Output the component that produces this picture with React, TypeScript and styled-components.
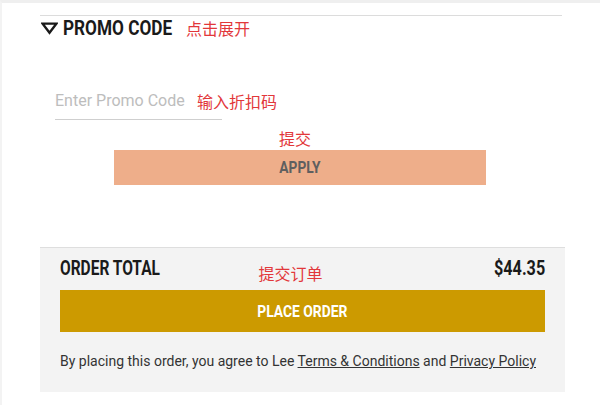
import React from "react";
import styled, { createGlobalStyle, css } from "styled-components";

const Global = createGlobalStyle`
  html, body { margin: 0; padding: 0; background: #fff; }
  body {
    font-family: Roboto, "Noto Sans CJK SC", sans-serif;
    border-top: 3px solid #efefef;
    border-left: 2px solid #f3f3f3;
    height: 405px;
    box-sizing: border-box;
    overflow: hidden;
  }
`;

const condensed = (origin: string, scale = 0.86) => css`
  display: inline-block;
  font-family: Roboto, sans-serif;
  font-weight: 700;
  transform: scaleX(${scale});
  transform-origin: ${origin} center;
`;

const Page = styled.div`
  padding: 12px 0 0 38px;
  width: 525px;
`;

const PromoSection = styled.section`
  width: 522px;
  border-top: 1px solid #dcdcdc;
`;

const PromoHeader = styled.div`
  display: flex;
  align-items: center;
  height: 22px;
  margin-top: 1px;
`;

const Triangle = styled.svg`
  width: 17px;
  height: 13px;
  margin: 0 5px 0 1px;
`;

const Heading = styled.h2`
  margin: 0 -17px 0 0;
  font-size: 20px;
  line-height: 22px;
  color: #1a1a1a;
  ${condensed("left")}
`;

const Note = styled.span`
  font-family: "Noto Sans CJK SC", sans-serif;
  font-size: 16px;
  color: #e2373a;
  font-weight: 400;
  line-height: 1;
`;

const HeaderNote = styled(Note)`
  margin-left: 13px;
`;

const PromoForm = styled.div`
  padding: 46px 0 0 15px;
  display: flex;
  flex-direction: column;
`;

const InputRow = styled.div`
  display: flex;
  align-items: center;
`;

const PromoInput = styled.input`
  width: 167px;
  border: none;
  border-bottom: 1px solid #cfcfcf;
  padding: 6px 0 9px 0;
  font-family: Roboto, sans-serif;
  font-size: 16px;
  color: #333;
  outline: none;
  background: transparent;
  &::placeholder { color: #bdbdbd; }
`;

const InputNote = styled(Note)`
  margin: -4px 0 0 -25px;
`;

const SubmitNote = styled.div`
  display: flex;
  justify-content: center;
  margin: 10px 0 4px 59px;
  width: 362px;
`;

const ApplyButton = styled.button`
  margin-left: 59px;
  width: 372px;
  height: 35px;
  border: none;
  background: #eeae8a;
  padding: 0;
`;

const ApplyLabel = styled.span`
  ${condensed("center")}
  color: #5f5f5f;
  font-size: 16px;
`;

const TotalPanel = styled.section`
  margin-top: 62px;
  width: 525px;
  background: #f3f3f3;
  border-top: 1px solid #dedede;
  padding: 8px 20px 20px 20px;
  box-sizing: border-box;
`;

const TotalRow = styled.div`
  display: grid;
  grid-template-columns: 1fr auto 1fr;
  align-items: start;
  height: 34px;
`;

const TotalLabel = styled.span`
  ${condensed("left", 0.775)}
  justify-self: start;
  font-size: 20px;
  line-height: 24px;
  color: #1a1a1a;
`;

const TotalAmount = styled.span`
  ${condensed("right", 0.81)}
  justify-self: end;
  font-size: 20px;
  line-height: 24px;
  color: #1a1a1a;
`;

const TotalNote = styled(Note)`
  margin-top: 9px;
  margin-right: 24px;
`;

const PlaceButton = styled.button`
  width: 100%;
  height: 42px;
  border: none;
  background: #cc9a00;
  display: block;
  padding: 0;
`;

const PlaceLabel = styled.span`
  ${condensed("center", 0.815)}
  color: #fff;
  font-size: 17px;
`;

const Disclaimer = styled.p`
  margin: 18px 0 0 0;
  font-size: 14px;
  color: #333;
  line-height: 22px;
`;

const Link = styled.a`
  color: #333;
  text-decoration: underline;
`;

export default function App() {
  return (
    <>
      <Global />
      <Page>
        <PromoSection>
          <PromoHeader>
            <Triangle viewBox="0 0 17 13">
              <path d="M1.6 1.6 L15.4 1.6 L8.5 10.8 Z" fill="none" stroke="#1a1a1a" strokeWidth="2.4" strokeLinejoin="miter" />
            </Triangle>
            <Heading>PROMO CODE</Heading>
            <HeaderNote>点击展开</HeaderNote>
          </PromoHeader>
          <PromoForm>
            <InputRow>
              <PromoInput placeholder="Enter Promo Code" />
              <InputNote>输入折扣码</InputNote>
            </InputRow>
            <SubmitNote>
              <Note>提交</Note>
            </SubmitNote>
            <ApplyButton>
              <ApplyLabel>APPLY</ApplyLabel>
            </ApplyButton>
          </PromoForm>
        </PromoSection>
        <TotalPanel>
          <TotalRow>
            <TotalLabel>ORDER TOTAL</TotalLabel>
            <TotalNote>提交订单</TotalNote>
            <TotalAmount>$44.35</TotalAmount>
          </TotalRow>
          <PlaceButton>
            <PlaceLabel>PLACE ORDER</PlaceLabel>
          </PlaceButton>
          <Disclaimer>
            By placing this order, you agree to Lee <Link href="#">Terms &amp; Conditions</Link> and{" "}
            <Link href="#">Privacy Policy</Link>
          </Disclaimer>
        </TotalPanel>
      </Page>
    </>
  );
}
